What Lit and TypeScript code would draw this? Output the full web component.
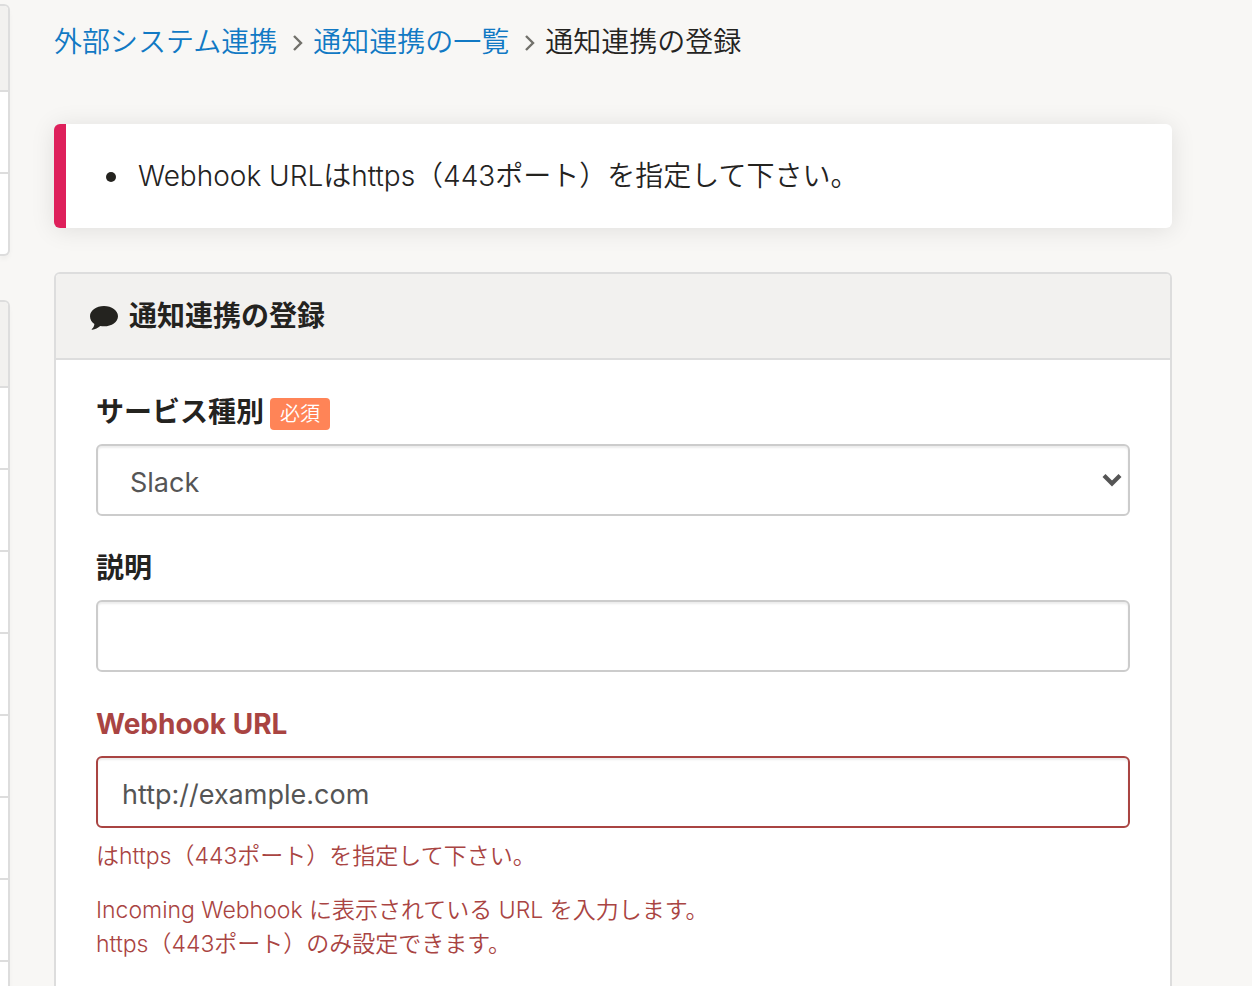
import { LitElement, html, css } from "lit";
import { customElement, property } from "lit/decorators.js";

@customElement("side-panel")
class SidePanel extends LitElement {
  @property({ type: Number }) rows = 1;

  static styles = css`
    :host {
      display: block;
      border: 2px solid #dddddd;
      border-left: 0;
      border-radius: 0 6px 6px 0;
      background: #fff;
      box-shadow: 0 4px 4px rgba(0, 0, 0, 0.03);
      overflow: hidden;
    }
    .head {
      height: 84px;
      background: #f2f1ef;
    }
    .row {
      height: 80px;
      border-top: 2px solid #dddddd;
    }
  `;

  render() {
    return html`
      <div class="head"></div>
      ${Array.from({ length: this.rows }, () => html`<div class="row"></div>`)}
    `;
  }
}

@customElement("app-root")
class AppRoot extends LitElement {
  static styles = css`
    :host {
      display: grid;
      grid-template-columns: 10px minmax(0, 1fr);
      height: 100vh;
      overflow: hidden;
      background: #f8f7f5;
      color: #24231f;
      font-family: Inter, "Noto Sans CJK JP", sans-serif;
      font-size: 28px;
      font-weight: 350;
      line-height: 40px;
    }
    * {
      box-sizing: border-box;
    }
    .side {
      display: flex;
      flex-direction: column;
      gap: 44px;
      padding-top: 4px;
    }
    side-panel {
      flex: none;
    }
    main {
      padding: 22px 80px 0 44px;
    }
    .crumbs {
      display: flex;
      align-items: center;
      margin: 0 0 62px;
      padding: 0;
      list-style: none;
    }
    .crumbs li {
      display: flex;
      align-items: center;
    }
    .crumbs a {
      color: #1179c4;
      text-decoration: none;
    }
    .sep {
      width: 10px;
      height: 16px;
      margin: 2px 10px 0 16px;
      fill: none;
      stroke: #72716b;
      stroke-width: 2.4;
    }
    .alert {
      border-left: 12px solid #de205b;
      border-radius: 6px;
      padding: 32px 40px;
      background: #fff;
      box-shadow: 0 2px 24px rgba(0, 0, 0, 0.1);
    }
    .alert ul {
      margin: 0;
      padding: 0;
      list-style: none;
    }
    .alert li {
      display: flex;
      align-items: baseline;
      gap: 22px;
    }
    .alert li::before {
      content: "";
      flex: none;
      align-self: center;
      width: 10px;
      height: 10px;
      margin-top: 2px;
      border-radius: 50%;
      background: #24231f;
    }
    .card {
      margin-top: 44px;
      border: 2px solid #dddddd;
      border-radius: 6px;
      background: #fff;
      overflow: hidden;
    }
    .card-head {
      display: flex;
      align-items: center;
      gap: 11px;
      margin: 0;
      padding: 22px 34px;
      border-bottom: 2px solid #dddddd;
      background: #f2f1ef;
      font-size: 28px;
      font-weight: 700;
    }
    .bubble {
      width: 28px;
      height: 24px;
      margin-top: 4px;
      fill: #24231f;
    }
    form {
      padding: 32px 40px 120px;
    }
    .group {
      margin-bottom: 32px;
    }
    .label {
      display: flex;
      align-items: center;
      gap: 6px;
      margin-bottom: 12px;
      font-weight: 700;
    }
    .badge {
      margin-top: 4px;
      padding: 0 10px;
      border-radius: 4px;
      background: #ff8457;
      color: #fff;
      font-size: 20px;
      font-weight: 350;
      line-height: 32px;
    }
    .control {
      display: block;
      width: 100%;
      height: 72px;
      margin: 0;
      padding: 4px 24px 0;
      border: 2px solid #cccccc;
      border-radius: 6px;
      outline: 0;
      background: #fff;
      box-shadow: inset 0 2px 2px rgba(0, 0, 0, 0.075);
      color: #555555;
      font: inherit;
      font-size: 27px;
      font-weight: 400;
    }
    .select {
      position: relative;
    }
    select.control {
      appearance: none;
      padding-top: 6px;
      padding-left: 32px;
    }
    .arrow {
      position: absolute;
      top: 28px;
      right: 8px;
      width: 20px;
      height: 16px;
      fill: none;
      stroke: #555555;
      stroke-width: 4.2;
      pointer-events: none;
    }
    .error {
      color: #a94442;
    }
    .error .control {
      border-color: #a94442;
    }
    .help {
      margin: 11px 0 20px;
      font-size: 23px;
      line-height: 34px;
    }
  `;

  private separator() {
    return html`<svg class="sep" viewBox="0 0 10 16" aria-hidden="true">
      <path d="M1 1 L8 8 L1 15" />
    </svg>`;
  }

  render() {
    return html`
      <div class="side">
        <side-panel .rows=${2}></side-panel>
        <side-panel .rows=${9}></side-panel>
      </div>
      <main>
        <nav>
          <ol class="crumbs">
            <li><a href="#">外部システム連携</a></li>
            <li>${this.separator()}<a href="#">通知連携の一覧</a></li>
            <li>${this.separator()}<span>通知連携の登録</span></li>
          </ol>
        </nav>
        <div class="alert" role="alert">
          <ul>
            <li>Webhook URLはhttps（443ポート）を指定して下さい。</li>
          </ul>
        </div>
        <section class="card">
          <h1 class="card-head">
            <svg class="bubble" viewBox="0 0 28 24" aria-hidden="true">
              <path
                d="M14 0C21.7 0 28 4.500 28 10.200S21.700 20.300 14 20.300c-1.300 0-2.500-.1-3.700-.3C8 22 5.200 23.300 2.200 23.800c-.5.1-.7-.4-.3-.8 1.300-1.300 2.300-2.600 2.500-5C1.700 16.200 0 13.400 0 10.200 0 4.500 6.300 0 14 0z"
              />
            </svg>
            <span>通知連携の登録</span>
          </h1>
          <form>
            <div class="group">
              <label class="label" for="service">
                <span>サービス種別</span><span class="badge">必須</span>
              </label>
              <div class="select">
                <select class="control" id="service">
                  <option>Slack</option>
                </select>
                <svg class="arrow" viewBox="0 0 20 16" aria-hidden="true">
                  <path d="M2 3.500 L10 11.500 L18 3.500" />
                </svg>
              </div>
            </div>
            <div class="group">
              <label class="label" for="description">説明</label>
              <input class="control" id="description" type="text" />
            </div>
            <div class="group error">
              <label class="label" for="webhook">Webhook URL</label>
              <input class="control" id="webhook" type="text" value="http://example.com" />
              <p class="help">はhttps（443ポート）を指定して下さい。</p>
              <p class="help">
                Incoming Webhook に表示されている URL を入力します。<br />
                https（443ポート）のみ設定できます。
              </p>
            </div>
          </form>
        </section>
      </main>
    `;
  }
}
